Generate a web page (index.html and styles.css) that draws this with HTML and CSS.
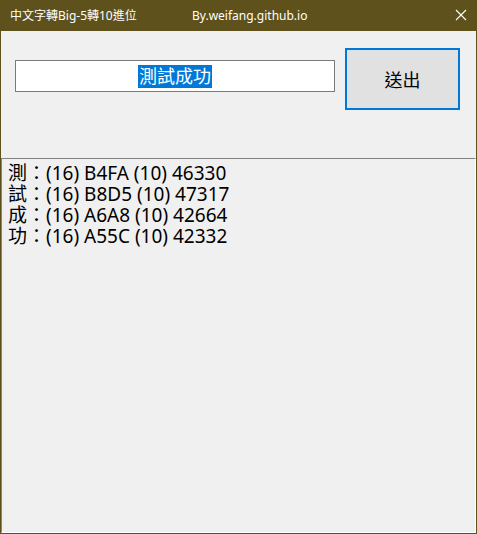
FILE: index.html
```html
<!DOCTYPE html>
<html lang="zh-Hant">
<head>
<meta charset="utf-8">
<link rel="stylesheet" href="styles.css">
</head>
<body>
<div class="window">
  <div class="titlebar">
    <span class="title">中文字轉Big-5轉10進位</span>
    <span class="author">By.weifang.github.io</span>
    <span class="close">
      <svg width="12" height="12" viewBox="0 0 12 12"><path d="M1 1L11 11M11 1L1 11" stroke="#fff" stroke-width="1.1" fill="none"/></svg>
    </span>
  </div>
  <div class="client">
    <div class="top">
      <div class="textbox"><span class="sel">測試成功</span></div>
      <div class="button">送出</div>
    </div>
    <div class="listbox">
      <div class="line">測：(16) B4FA (10) 46330</div>
      <div class="line">試：(16) B8D5 (10) 47317</div>
      <div class="line">成：(16) A6A8 (10) 42664</div>
      <div class="line">功：(16) A55C (10) 42332</div>
    </div>
  </div>
</div>
</body>
</html>
```
FILE: styles.css
```css
html, body { margin: 0; padding: 0; }
body { width: 477px; height: 534px; overflow: hidden; font-family: "Noto Sans", "Noto Sans CJK TC", sans-serif; }
.window {
  width: 477px; height: 534px; box-sizing: border-box;
  background: #5e511b; padding: 0 1px 1px 1px;
  display: flex; flex-direction: column;
}
.titlebar {
  height: 31px; display: flex; align-items: center; color: #fff;
  font-size: 12px; font-family: "Noto Sans", "Noto Sans CJK TC", sans-serif;
  padding-left: 9px; padding-bottom: 1px; box-sizing: border-box;
}
.title { width: 182px; }
.author { flex: 1; }
.close { width: 12px; height: 12px; margin-right: 9px; display: flex; }
.client { flex: 1; background: #f0f0f0; display: flex; flex-direction: column; }
.top { height: 127px; display: flex; align-items: flex-start; padding: 17px 0 0 14px; box-sizing: border-box; gap: 10px; }
.textbox {
  margin-top: 12px; width: 320px; height: 32px; box-sizing: border-box;
  border: 1px solid #7a7a7a; background: #fff;
  display: flex; align-items: center; justify-content: center;
  font-size: 18px;
}
.sel { background: #0078d7; color: #fff; line-height: 23px; padding: 0 1px; }
.button {
  width: 115px; height: 62px; box-sizing: border-box;
  border: 2px solid #0078d7; background: #e1e1e1;
  display: flex; align-items: center; justify-content: center;
  font-size: 18px; color: #000;
}
.listbox {
  flex: 1; border-top: 1px solid #828282; border-left: 1px solid #828282;
  border-right: 1px solid #fff; border-bottom: 1px solid #fff;
  padding: 4px 0 0 6px; background: #f0f0f0;
}
.line { font-size: 19px; line-height: 21px; height: 21px; color: #000; white-space: nowrap; }
```
